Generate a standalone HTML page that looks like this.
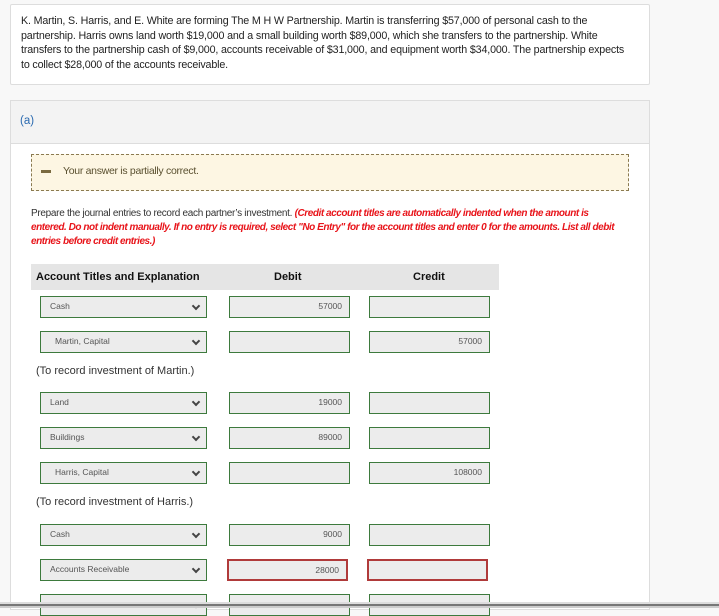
<!DOCTYPE html>
<html><head><style>
*{margin:0;padding:0;box-sizing:border-box}
body{width:719px;height:608px;overflow:hidden;background:#f8f8f8;font-family:"Liberation Sans",sans-serif;position:relative;color:#222}
.abs{position:absolute}
.card{left:10px;top:4px;width:640px;height:81px;background:#fff;border:1px solid #ddd;border-radius:2px;font-size:10.7px;line-height:14.5px;padding:9px 10px;letter-spacing:-0.15px;white-space:nowrap}
.panel{left:10px;top:100px;width:640px;height:510px;background:#fff;border:1px solid #ddd}
.ph{left:11px;top:101px;width:638px;height:43px;background:#f3f3f3;border-bottom:1px solid #ddd}
.sel{position:absolute;left:40px;width:167px;height:22px;background:#ececec;border:1.5px solid #3d7a3d;font-size:8.5px;color:#555;line-height:19px;padding-left:9px}
.sel::after{content:"";position:absolute;right:7px;top:6px;width:4px;height:4px;border-right:2px solid #444;border-bottom:2px solid #444;transform:rotate(45deg)}
.inp{position:absolute;width:121px;height:22px;background:#ececec;border:1.5px solid #3d7a3d;font-size:8.5px;color:#555;line-height:19px;text-align:right;padding-right:7px}
.red{border:2px solid #b03a3a}
.note{position:absolute;left:36px;font-size:11px;color:#333}
</style></head><body>
<div class="abs card">K. Martin, S. Harris, and E. White are forming The M H W Partnership. Martin is transferring $57,000 of personal cash to the<br>partnership. Harris owns land worth $19,000 and a small building worth $89,000, which she transfers to the partnership. White<br>transfers to the partnership cash of $9,000, accounts receivable of $31,000, and equipment worth $34,000. The partnership expects<br>to collect $28,000 of the accounts receivable.</div>
<div class="abs panel"></div>
<div class="abs ph"></div>
<div class="abs" style="left:20px;top:115px;font-size:11.5px;color:#2a6ab0">(a)</div>
<div class="abs" style="left:31px;top:154px;width:598px;height:37px;background:#fdf6e3;border:1px dashed #8a7a50"></div>
<div class="abs" style="left:41px;top:170px;width:10px;height:3px;background:#7a6a40"></div>
<div class="abs" style="left:63px;top:165px;font-size:10.5px;color:#5a5030;letter-spacing:-0.3px">Your answer is partially correct.</div>
<div class="abs" style="left:31px;top:207px;width:600px;font-size:10px;line-height:14px;letter-spacing:-0.3px;color:#333;white-space:nowrap">Prepare the journal entries to record each partner’s investment. <b style="color:#e8141a;font-style:italic;letter-spacing:-0.45px">(Credit account titles are automatically indented when the amount is<br>entered. Do not indent manually. If no entry is required, select "No Entry" for the account titles and enter 0 for the amounts. List all debit<br>entries before credit entries.)</b></div>
<div class="abs" style="left:31px;top:264px;width:468px;height:26px;background:#e5e5e5;font-size:11px;font-weight:bold;line-height:26px;color:#111">
<span class="abs" style="left:5px">Account Titles and Explanation</span><span class="abs" style="left:243px">Debit</span><span class="abs" style="left:382px">Credit</span></div>

<div class="sel" style="top:296px">Cash</div><div class="inp" style="left:229px;top:296px">57000</div><div class="inp" style="left:369px;top:296px"></div>
<div class="sel" style="top:331px;padding-left:14px">Martin, Capital</div><div class="inp" style="left:229px;top:331px"></div><div class="inp" style="left:369px;top:331px">57000</div>
<div class="note" style="top:365px">(To record investment of Martin.)</div>
<div class="sel" style="top:392px">Land</div><div class="inp" style="left:229px;top:392px">19000</div><div class="inp" style="left:369px;top:392px"></div>
<div class="sel" style="top:427px">Buildings</div><div class="inp" style="left:229px;top:427px">89000</div><div class="inp" style="left:369px;top:427px"></div>
<div class="sel" style="top:462px;padding-left:14px">Harris, Capital</div><div class="inp" style="left:229px;top:462px"></div><div class="inp" style="left:369px;top:462px">108000</div>
<div class="note" style="top:496px">(To record investment of Harris.)</div>
<div class="sel" style="top:524px">Cash</div><div class="inp" style="left:229px;top:524px">9000</div><div class="inp" style="left:369px;top:524px"></div>
<div class="sel" style="top:559px">Accounts Receivable</div><div class="inp red" style="left:227px;top:559px">28000</div><div class="inp red" style="left:367px;top:559px"></div>
<div class="sel" style="top:594px"></div><div class="inp" style="left:229px;top:594px"></div><div class="inp" style="left:369px;top:594px"></div>
<div class="abs" style="left:0;top:602px;width:719px;height:2px;background:#ddd"></div>
<div class="abs" style="left:0;top:604px;width:719px;height:2px;background:#777"></div>
<div class="abs" style="left:0;top:606px;width:719px;height:2px;background:#ccc"></div>
</body></html>
